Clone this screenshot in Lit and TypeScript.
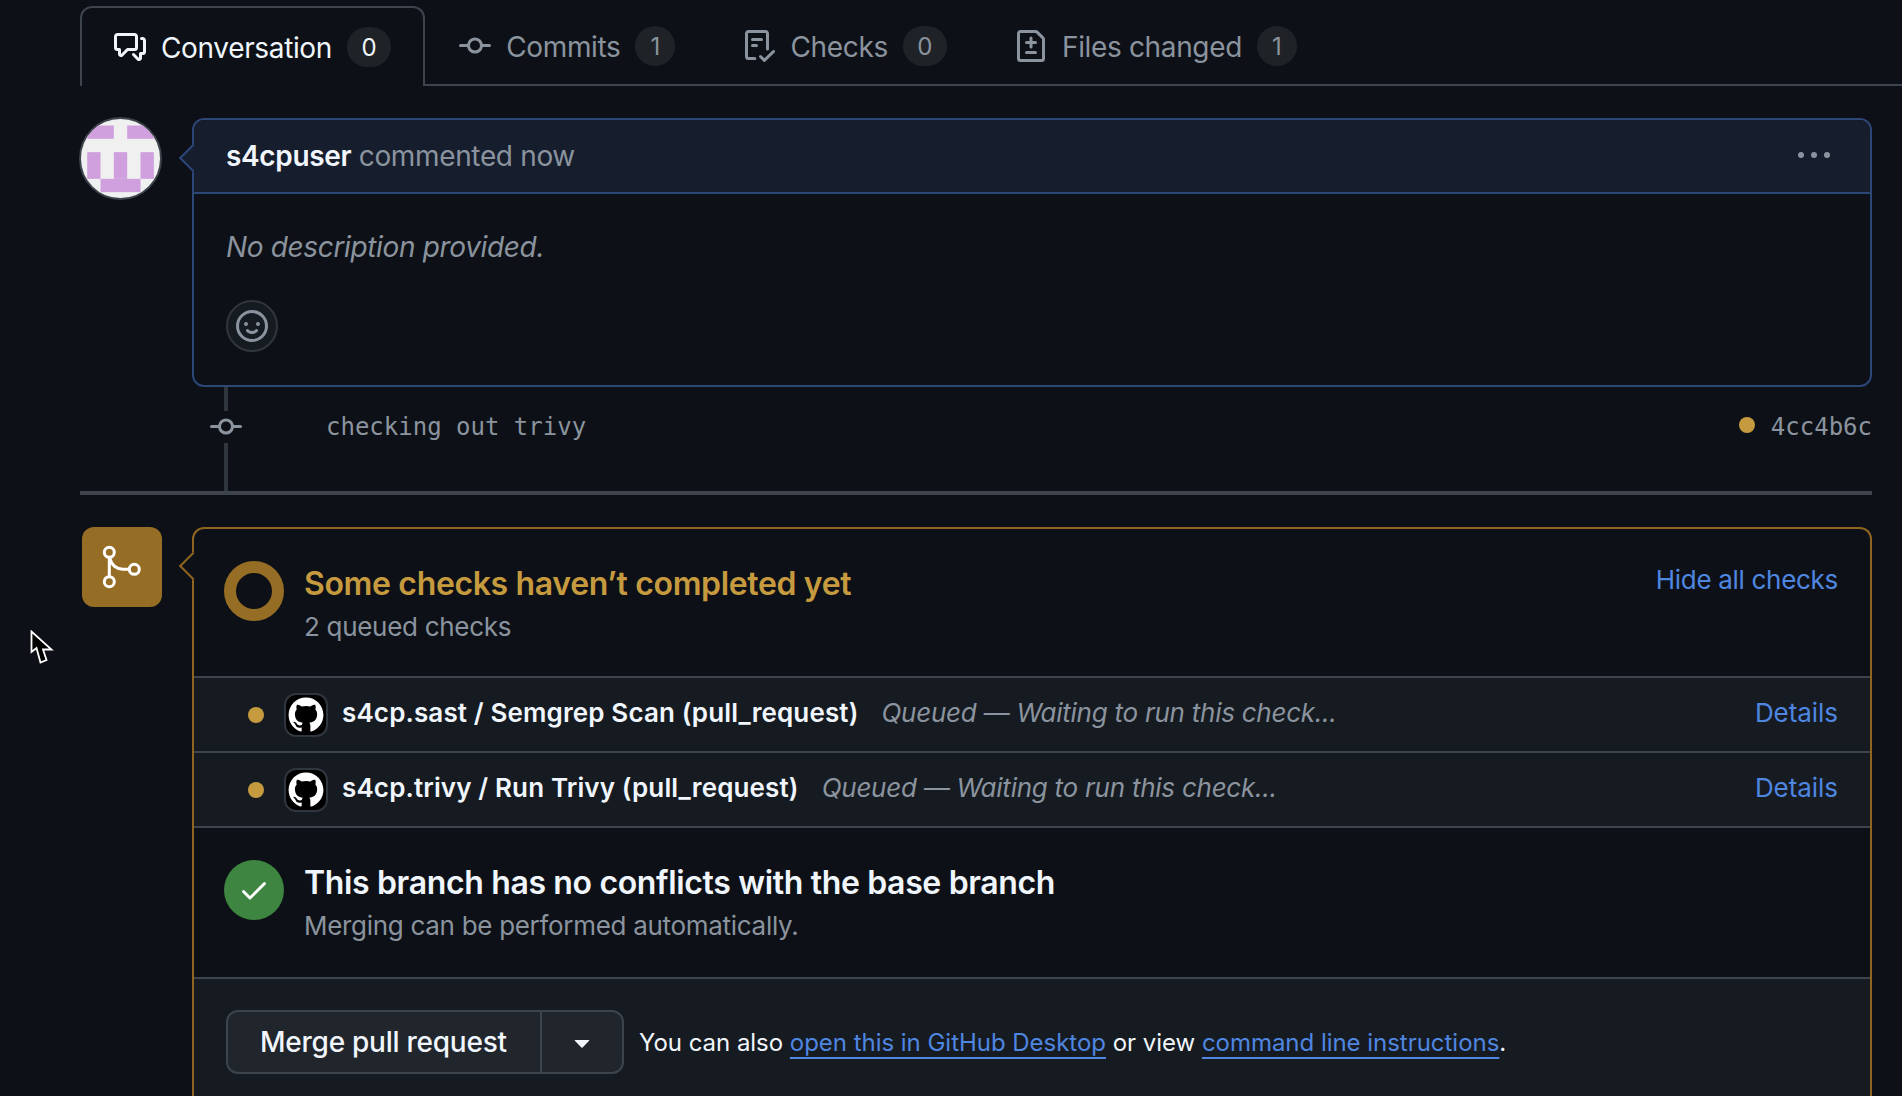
import { LitElement, html, svg, css } from "lit";
import { customElement } from "lit/decorators.js";

const ICONS = {
	discussion:
		"M1.75 1h8.5c.966 0 1.75.784 1.75 1.75v5.5A1.75 1.75 0 0 1 10.25 10H7.061l-2.574 2.573A1.458 1.458 0 0 1 2 11.543V10h-.25A1.75 1.75 0 0 1 0 8.25v-5.5C0 1.784.784 1 1.75 1ZM1.5 2.75v5.5c0 .138.112.25.25.25h1a.75.75 0 0 1 .75.75v2.19l2.72-2.72a.749.749 0 0 1 .53-.22h3.5a.25.25 0 0 0 .25-.25v-5.5a.25.25 0 0 0-.25-.25h-8.5a.25.25 0 0 0-.25.25Zm13 2a.25.25 0 0 0-.25-.25h-.5a.75.75 0 0 1 0-1.5h.5c.966 0 1.75.784 1.75 1.75v5.5A1.75 1.75 0 0 1 14.25 12H14v1.543a1.458 1.458 0 0 1-2.487 1.03L9.22 12.28a.749.749 0 0 1 .53-1.28.749.749 0 0 1 .53.22l2.22 2.22v-2.19a.75.75 0 0 1 .75-.75h1a.25.25 0 0 0 .25-.25Z",
	commit:
		"M11.93 8.5a4.002 4.002 0 0 1-7.86 0H.75a.75.75 0 0 1 0-1.5h3.32a4.002 4.002 0 0 1 7.86 0h3.32a.75.75 0 0 1 0 1.5Zm-1.43-.75a2.5 2.5 0 1 0-5 0 2.5 2.5 0 0 0 5 0Z",
	checklist:
		"M2.5 1.75v11.5c0 .138.112.25.25.25h3.17a.75.75 0 0 1 0 1.5H2.75A1.75 1.75 0 0 1 1 13.25V1.75C1 .784 1.784 0 2.75 0h8.5C12.216 0 13 .784 13 1.75v7.736a.75.75 0 0 1-1.5 0V1.75a.25.25 0 0 0-.25-.25h-8.5a.25.25 0 0 0-.25.25Zm13.274 9.537v-.001l-4.557 4.45a.75.75 0 0 1-1.055-.008l-1.943-1.95a.75.75 0 0 1 1.062-1.058l1.419 1.425 4.026-3.932a.75.75 0 1 1 1.048 1.074ZM4.75 4h4.5a.75.75 0 0 1 0 1.5h-4.5a.75.75 0 0 1 0-1.5ZM4 7.75A.75.75 0 0 1 4.75 7h2a.75.75 0 0 1 0 1.5h-2A.75.75 0 0 1 4 7.75Z",
	fileDiff:
		"M1 1.75C1 .784 1.784 0 2.75 0h7.586c.464 0 .909.184 1.237.513l2.914 2.914c.329.328.513.773.513 1.237v9.586A1.75 1.75 0 0 1 13.25 16H2.75A1.75 1.75 0 0 1 1 14.25Zm1.75-.25a.25.25 0 0 0-.25.25v12.5c0 .138.112.25.25.25h10.5a.25.25 0 0 0 .25-.25V4.664a.25.25 0 0 0-.073-.177l-2.914-2.914a.25.25 0 0 0-.177-.073ZM8 3.25a.75.75 0 0 1 .75.75v1.5h1.5a.75.75 0 0 1 0 1.5h-1.5v1.5a.75.75 0 0 1-1.5 0V7h-1.5a.75.75 0 0 1 0-1.5h1.5V4A.75.75 0 0 1 8 3.25Zm-3 8a.75.75 0 0 1 .75-.75h4.5a.75.75 0 0 1 0 1.5h-4.5a.75.75 0 0 1-.75-.75Z",
	smiley:
		"M8 0a8 8 0 1 1 0 16A8 8 0 0 1 8 0ZM1.5 8a6.5 6.5 0 1 0 13 0 6.5 6.5 0 0 0-13 0Zm3.82 1.636a.75.75 0 0 1 1.038.175l.007.009c.103.118.22.222.35.31.264.178.683.37 1.285.37.602 0 1.02-.192 1.285-.371.13-.088.247-.192.35-.31l.007-.008a.75.75 0 0 1 1.222.87l-.022-.015c.02.013.021.015.021.015v.001l-.001.002-.002.003-.005.007-.014.019a2.066 2.066 0 0 1-.184.213c-.16.166-.338.316-.53.445-.63.418-1.37.638-2.127.629-.946 0-1.652-.308-2.126-.63a3.331 3.331 0 0 1-.715-.657l-.014-.02-.005-.006-.002-.003v-.002h-.001l.613-.432-.614.43a.75.75 0 0 1 .183-1.044ZM12 7a1 1 0 1 1-2 0 1 1 0 0 1 2 0ZM5 8a1 1 0 1 1 0-2 1 1 0 0 1 0 2Zm5.25 2.25.592.416a97.71 97.71 0 0 0-.592-.416Z",
	kebab: "M8 9a1.5 1.5 0 1 0 0-3 1.5 1.5 0 0 0 0 3ZM1.5 9a1.5 1.5 0 1 0 0-3 1.5 1.5 0 0 0 0 3Zm13 0a1.5 1.5 0 1 0 0-3 1.5 1.5 0 0 0 0 3Z",
	check:
		"M13.78 4.22a.75.75 0 0 1 0 1.06l-7.25 7.25a.75.75 0 0 1-1.06 0L2.22 9.28a.751.751 0 0 1 .018-1.042.751.751 0 0 1 1.042-.018L6 10.94l6.72-6.72a.75.75 0 0 1 1.06 0Z",
	caret: "m4.427 7.427 3.396 3.396a.25.25 0 0 0 .354 0l3.396-3.396A.25.25 0 0 0 11.396 7H4.604a.25.25 0 0 0-.177.427Z",
};

const MARK_GITHUB =
	"M12 1C5.923 1 1 5.923 1 12c0 4.867 3.149 8.979 7.521 10.436.55.096.756-.233.756-.522 0-.262-.013-1.128-.013-2.049-2.764.509-3.479-.674-3.699-1.292-.124-.317-.66-1.293-1.127-1.554-.385-.207-.936-.715-.014-.729.866-.014 1.485.797 1.691 1.128.99 1.663 2.571 1.196 3.204.907.096-.715.385-1.196.701-1.471-2.448-.275-5.005-1.224-5.005-5.432 0-1.196.426-2.186 1.128-2.956-.11-.275-.495-1.402.11-2.915 0 0 .921-.288 3.024 1.128a10.193 10.193 0 0 1 2.75-.371c.936 0 1.871.123 2.75.371 2.104-1.43 3.025-1.128 3.025-1.128.605 1.513.221 2.64.111 2.915.701.77 1.127 1.747 1.127 2.956 0 4.222-2.571 5.157-5.019 5.432.399.344.743 1.004.743 2.035 0 1.471-.014 2.654-.014 3.025 0 .289.206.632.756.522C19.851 20.979 23 16.854 23 12c0-6.077-4.922-11-11-11Z";

const TABS = [
	{ label: "Conversation", icon: ICONS.discussion, count: 0, active: true },
	{ label: "Commits", icon: ICONS.commit, count: 1 },
	{ label: "Checks", icon: ICONS.checklist, count: 0 },
	{ label: "Files changed", icon: ICONS.fileDiff, count: 1 },
];

const CHECKS = ["s4cp.sast / Semgrep Scan (pull_request)", "s4cp.trivy / Run Trivy (pull_request)"];

// identicon cells as [col, row, width, height] on a 5x5 grid
const IDENTICON = [
	[0, 0, 2, 1],
	[3, 0, 2, 1],
	[0, 2, 1, 2],
	[2, 2, 1, 2],
	[4, 2, 1, 2],
	[1, 4, 3, 1],
];
const CELL = 13.33;

const icon = (d: string, size = 32) => html`
	<svg class="icon" width="${size}" height="${size}" viewBox="0 0 16 16" fill="currentColor" aria-hidden="true">
		<path d="${d}" />
	</svg>
`;

@customElement("app-root")
export class AppRoot extends LitElement {
	static styles = css`
		:host {
			display: block;
			position: relative;
			height: 1096px;
			overflow: hidden;
			background: #0d1117;
			color: #f0f6fc;
			font-family: Inter, "Noto Sans", sans-serif;
			font-size: 28px;
		}

		a {
			color: #4f86e0;
			text-decoration: none;
		}

		.icon {
			display: block;
			flex: none;
		}

		.page {
			padding: 6px 30px 0 80px;
		}

		.tabs {
			display: flex;
			height: 80px;
			margin-right: -30px;
			box-shadow: inset 0 -2px 0 #3d444d;
		}

		.tab {
			display: flex;
			align-items: center;
			gap: 15px;
			padding: 0 34px;
			color: #8b949e;
			letter-spacing: -0.35px;
		}

		.tab-label {
			padding-top: 2px;
		}

		.tab.active {
			color: #f0f6fc;
			background: #0d1117;
			border: 2px solid #3d444d;
			border-bottom: 0;
			border-radius: 12px 12px 0 0;
			padding: 0 32px;
		}

		.count {
			min-width: 40px;
			height: 40px;
			padding: 0 14.5px;
			box-sizing: border-box;
			border-radius: 20px;
			background: #1f2328;
			font-size: 24px;
			line-height: 42px;
			text-align: center;
			letter-spacing: 0;
		}

		.item {
			display: flex;
			align-items: flex-start;
		}

		.comment-item {
			margin-top: 32px;
		}

		.avatar {
			flex: none;
			width: 83px;
			height: 83px;
			margin: -1.5px 30.5px 0 -1.5px;
			box-sizing: border-box;
			border: 2px solid #3d444d;
			border-radius: 50%;
			background: #f0f0f0;
			overflow: hidden;
		}

		.avatar svg {
			display: block;
		}

		.card {
			position: relative;
			flex: 1;
			min-width: 0;
			border: 2px solid #2c4677;
			border-radius: 12px;
		}

		.arrow {
			position: absolute;
			left: -11px;
			top: 28px;
			width: 20px;
			height: 20px;
			box-sizing: border-box;
			background: #161d2d;
			border-left: 2px solid #2c4677;
			border-bottom: 2px solid #2c4677;
			transform: rotate(45deg);
		}

		.comment-head {
			display: flex;
			align-items: center;
			justify-content: space-between;
			height: 72px;
			padding: 0 32px;
			background: #161d2d;
			border-bottom: 2px solid #2c4677;
			border-radius: 10px 10px 0 0;
			letter-spacing: -0.35px;
		}

		.comment-head strong {
			font-weight: 600;
		}

		.muted {
			color: #8b949e;
		}

		.kebab {
			color: #8b949e;
			margin-right: 8px;
		}

		.comment-body {
			padding: 33px 32px 33px;
		}

		.comment-body em {
			display: block;
			line-height: 40px;
			color: #8b949e;
			letter-spacing: -0.35px;
		}

		.reaction {
			display: flex;
			align-items: center;
			justify-content: center;
			width: 52px;
			height: 52px;
			margin-top: 33px;
			box-sizing: border-box;
			border: 2px solid #30363d;
			border-radius: 50%;
			background: #161b22;
			color: #8b949e;
		}

		.commit {
			position: relative;
			display: flex;
			align-items: center;
			margin-left: 112px;
			padding: 24px 0 48px;
			font-family: "DejaVu Sans Mono", monospace;
			font-size: 24px;
			color: #8b949e;
		}

		.commit::before {
			content: "";
			position: absolute;
			left: 32px;
			top: 0;
			bottom: 0;
			width: 4px;
			background: #30363d;
		}

		.commit-icon {
			position: relative;
			margin-left: 18px;
			background: #0d1117;
			color: #8b949e;
		}

		.commit-msg {
			margin-left: 84px;
		}

		.commit-status {
			display: flex;
			align-items: center;
			gap: 16px;
			margin-left: auto;
		}

		.dot {
			flex: none;
			width: 16px;
			height: 16px;
			border-radius: 50%;
			background: #c69a3e;
		}

		.commit-status .dot {
			margin-top: -5px;
		}

		.rule {
			height: 4px;
			background: #3d444d;
		}

		.merge-item {
			margin-top: 32px;
		}

		.merge-badge {
			flex: none;
			display: flex;
			align-items: center;
			justify-content: center;
			width: 80px;
			height: 80px;
			margin: 0 30px 0 2px;
			border-radius: 12px;
			background: #966d25;
			color: #fff;
		}

		.merge-card {
			border-color: #8f6420;
			border-bottom: 0;
			border-radius: 12px 12px 0 0;
		}

		.merge-card .arrow {
			top: 27px;
			background: #0d1117;
			border-color: #8f6420;
		}

		.section {
			display: flex;
			align-items: flex-start;
			gap: 20px;
			padding: 32px 32px 29px 30px;
		}

		.ring {
			flex: none;
			width: 60px;
			height: 60px;
			box-sizing: border-box;
			border: 12px solid #966d25;
			border-radius: 50%;
		}

		.title {
			margin-top: 1px;
			font-size: 32px;
			font-weight: 600;
			line-height: 44px;
			letter-spacing: -0.35px;
		}

		.title.pending {
			color: #c69a3e;
		}

		.sub {
			margin-top: 1px;
			font-size: 26px;
			line-height: 40px;
			color: #8b949e;
			letter-spacing: -0.3px;
		}

		.hide {
			margin: -1px 0 0 auto;
			font-size: 26px;
			line-height: 40px;
			letter-spacing: -0.3px;
		}

		.row {
			display: flex;
			align-items: center;
			height: 73px;
			padding: 0 32px 0 54px;
			background: #161b22;
			border-top: 2px solid #3d444d;
			font-size: 26px;
		}

		.row .dot {
			margin-right: 20px;
		}

		.row-avatar {
			flex: none;
			display: flex;
			align-items: center;
			justify-content: center;
			width: 44px;
			height: 44px;
			margin-right: 14px;
			box-sizing: border-box;
			border: 2px solid #30363d;
			border-radius: 12px;
			background: #000;
			color: #fff;
		}

		.row strong,
		.row em,
		.row a {
			margin-bottom: 4px;
		}

		.row strong {
			font-weight: 600;
			letter-spacing: 0.13px;
			margin-right: 23px;
		}

		.row em {
			color: #8b949e;
			letter-spacing: -0.25px;
		}

		.row a {
			margin-left: auto;
			letter-spacing: -0.05px;
		}

		.section.conflicts {
			padding: 32px 32px 31px 30px;
			border-top: 2px solid #3d444d;
		}

		.success {
			flex: none;
			display: flex;
			align-items: center;
			justify-content: center;
			width: 60px;
			height: 60px;
			border-radius: 50%;
			background: #3d8540;
			color: #fff;
		}

		.actions {
			display: flex;
			align-items: center;
			gap: 15px;
			padding: 31px 32px 60px;
			background: #161b22;
			border-top: 2px solid #3d444d;
		}

		.merge-btn {
			display: flex;
			align-items: stretch;
			flex: none;
			width: 398px;
			height: 64px;
			box-sizing: border-box;
			border: 2px solid #3d444d;
			border-radius: 12px;
			background: #21262d;
			font-weight: 500;
			letter-spacing: -0.25px;
		}

		.merge-label {
			display: flex;
			align-items: center;
			width: 314px;
			padding-left: 32px;
			box-sizing: border-box;
			border-right: 2px solid #3d444d;
		}

		.merge-caret {
			flex: 1;
			display: flex;
			align-items: center;
			justify-content: center;
		}

		.hint {
			font-size: 24px;
			letter-spacing: -0.03px;
		}

		.hint a {
			text-decoration: underline 2px;
			text-underline-offset: 6px;
			text-decoration-skip-ink: none;
		}

		.pointer {
			position: absolute;
			left: 30px;
			top: 630px;
		}
	`;

	#avatar() {
		return svg`
			<svg width="79" height="79" viewBox="0 0 79 79" aria-hidden="true">
				${IDENTICON.map(
					([col, row, w, h]) => svg`
						<rect x="${6.2 + col * CELL}" y="${6.5 + row * CELL}" width="${w * CELL}" height="${h * CELL}" fill="#cfa0dd" />
					`,
				)}
			</svg>
		`;
	}

	// thinner than the stock octicon, so drawn with strokes
	#mergeIcon() {
		return svg`
			<svg class="icon" width="48" height="48" viewBox="0 0 48 48" fill="none" stroke="currentColor" stroke-width="3" aria-hidden="true">
				<circle cx="11.3" cy="9.3" r="5" />
				<circle cx="11.3" cy="38.7" r="5" />
				<circle cx="36.3" cy="26.3" r="5" />
				<path d="M11.3 14.3v19.4M12 15.5c1.5 7 7 10.8 13 10.8h6.3" />
			</svg>
		`;
	}

	render() {
		return html`
			<div class="page">
				<nav class="tabs">
					${TABS.map(
						(tab) => html`
							<div class="tab ${tab.active ? "active" : ""}">
								${icon(tab.icon)}
								<span class="tab-label">${tab.label}</span>
								<span class="count">${tab.count}</span>
							</div>
						`,
					)}
				</nav>

				<div class="item comment-item">
					<div class="avatar">${this.#avatar()}</div>
					<div class="card">
						<div class="arrow"></div>
						<div class="comment-head">
							<span><strong>s4cpuser</strong> <span class="muted">commented now</span></span>
							<span class="kebab">${icon(ICONS.kebab)}</span>
						</div>
						<div class="comment-body">
							<em>No description provided.</em>
							<div class="reaction">${icon(ICONS.smiley)}</div>
						</div>
					</div>
				</div>

				<div class="commit">
					<span class="commit-icon">${icon(ICONS.commit)}</span>
					<span class="commit-msg">checking out trivy</span>
					<span class="commit-status"><span class="dot"></span>4cc4b6c</span>
				</div>
				<div class="rule"></div>

				<div class="item merge-item">
					<div class="merge-badge">${this.#mergeIcon()}</div>
					<div class="card merge-card">
						<div class="arrow"></div>
						<div class="section">
							<div class="ring"></div>
							<div>
								<div class="title pending">Some checks haven’t completed yet</div>
								<div class="sub">2 queued checks</div>
							</div>
							<a class="hide" href="#">Hide all checks</a>
						</div>
						${CHECKS.map(
							(name) => html`
								<div class="row">
									<span class="dot"></span>
									<span class="row-avatar">
										<svg class="icon" width="38" height="38" viewBox="0 0 24 24" fill="currentColor" aria-hidden="true">
											<path d="${MARK_GITHUB}" />
										</svg>
									</span>
									<strong>${name}</strong>
									<em>Queued — Waiting to run this check...</em>
									<a href="#">Details</a>
								</div>
							`,
						)}
						<div class="section conflicts">
							<div class="success">${icon(ICONS.check)}</div>
							<div>
								<div class="title">This branch has no conflicts with the base branch</div>
								<div class="sub">Merging can be performed automatically.</div>
							</div>
						</div>
						<div class="actions">
							<div class="merge-btn">
								<span class="merge-label">Merge pull request</span>
								<span class="merge-caret">${icon(ICONS.caret)}</span>
							</div>
							<span class="hint">
								You can also <a href="#">open this in GitHub Desktop</a> or view
								<a href="#">command line instructions</a>.
							</span>
						</div>
					</div>
				</div>
			</div>

			<svg class="pointer" width="24" height="36" viewBox="0 0 24 36" aria-hidden="true">
				<path d="M1.500 1.500v20.500l5-4 4 14.500 6-2.500-3.500-10.500h8.500Z" fill="#000" stroke="#fff" stroke-width="1.8" stroke-linejoin="miter" />
			</svg>
		`;
	}
}
